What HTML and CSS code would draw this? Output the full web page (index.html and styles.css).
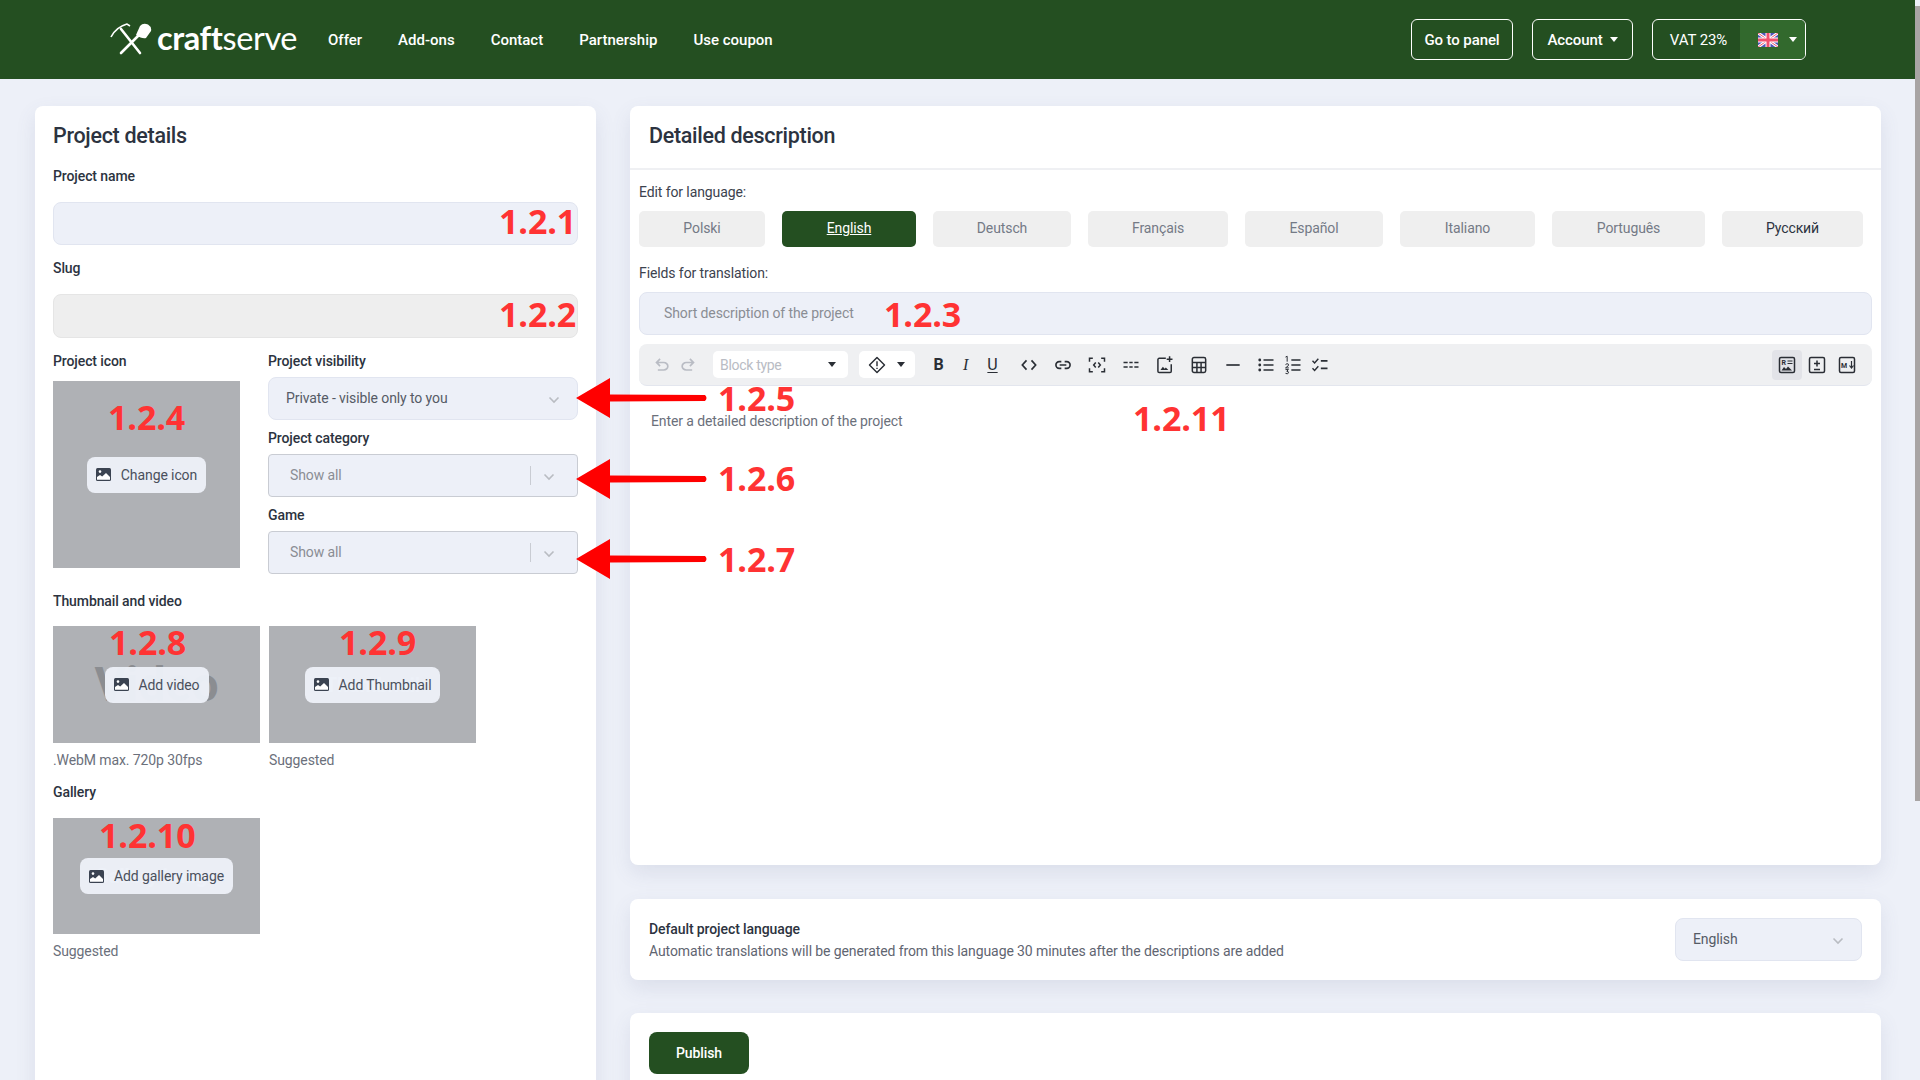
FILE: index.html
```html
<!DOCTYPE html>
<html lang="en">
<head>
<meta charset="utf-8">
<title>craftserve</title>
<link rel="stylesheet" href="styles.css">
</head>
<body>
<svg class="sprites" width="0" height="0" aria-hidden="true">
  <symbol id="pic" viewBox="0 0 15 13"><rect x="0" y="0" width="15" height="13" rx="1.5" fill="#3b4351"/><circle cx="4" cy="3.6" r="1.3" fill="#fff"/><path d="M1 11.8V9l3-2 2.2 1.6L10 5l4 4v2.8Z" fill="#fff"/></symbol>
  <symbol id="chev" viewBox="0 0 12 8"><path d="M1.5 1.5 6 6l4.5-4.5" fill="none" stroke="#b9bcc2" stroke-width="1.6"/></symbol>
</svg>
<header class="nav">
  <div class="logo">
    <svg class="logo-mark" viewBox="0 0 42 32" width="42" height="32"><path d="M1 14C4 8 10 3 17 1L20 3" fill="none" stroke="#fff" stroke-width="1.6"/><path d="M11 6 30 30" stroke="#fff" stroke-width="2.6" stroke-linecap="round"/><path d="M11 30 28 13" stroke="#fff" stroke-width="2.6" stroke-linecap="round"/><path d="M26 12 30 3Q33-.5 38 1.5 42 4 41 8L36 15Q32 16 26 12Z" fill="#fff"/></svg>
    <span class="logo-text"><b>craft</b>serve</span>
  </div>
  <nav class="menu">
    <a>Offer</a><a>Add-ons</a><a>Contact</a><a>Partnership</a><a>Use coupon</a>
  </nav>
  <div class="nav-right">
    <a class="nbtn panel">Go to panel</a>
    <a class="nbtn account">Account <i class="caret"></i></a>
    <div class="nbtn vat">
      <span class="vat-text">VAT 23%</span>
      <span class="vat-flag">
        <svg width="20" height="14" viewBox="0 0 20 14"><rect width="20" height="14" fill="#4f55b8"/><path d="M0 0 20 14M20 0 0 14" stroke="#fff" stroke-width="3"/><path d="M0 0 20 14M20 0 0 14" stroke="#f0506e" stroke-width="1"/><path d="M10 0V14M0 7H20" stroke="#fff" stroke-width="5"/><path d="M10 0V14M0 7H20" stroke="#f0506e" stroke-width="3"/></svg>
        <i class="caret"></i>
      </span>
    </div>
  </div>
</header>

<main class="page">
  <section class="card left">
    <h2 class="title">Project details</h2>
    <label class="lbl lbl-input">Project name</label>
    <div class="input"></div>
    <label class="lbl lbl-input next">Slug</label>
    <div class="input slug"></div>

    <div class="split">
      <div class="icon-col">
        <label class="lbl lbl-icon">Project icon</label>
        <div class="tile tile-icon">
          <span class="ghost ghost-icon">200 x 200</span>
          <span class="pbtn"><svg class="pic"><use href="#pic"/></svg>Change icon</span>
        </div>
      </div>
      <div class="sel-col">
        <label class="lbl lbl-sel">Project visibility</label>
        <div class="select plain"><span>Private - visible only to you</span><svg class="chev"><use href="#chev"/></svg></div>
        <label class="lbl lbl-sel next-sel">Project category</label>
        <div class="select react"><span>Show all</span><i class="sep"></i><svg class="chev"><use href="#chev"/></svg></div>
        <label class="lbl lbl-sel next-sel">Game</label>
        <div class="select react"><span>Show all</span><i class="sep"></i><svg class="chev"><use href="#chev"/></svg></div>
      </div>
    </div>

    <label class="lbl lbl-thumb">Thumbnail and video</label>
    <div class="tiles">
      <div>
        <div class="tile tile-wide">
          <span class="ghost ghost-video">Video</span>
          <span class="pbtn"><svg class="pic"><use href="#pic"/></svg>Add video</span>
        </div>
        <p class="hint">.WebM max. 720p 30fps</p>
      </div>
      <div>
        <div class="tile tile-wide">
          <span class="ghost ghost-faint">Thumbnail</span>
          <span class="pbtn"><svg class="pic"><use href="#pic"/></svg>Add Thumbnail</span>
        </div>
        <p class="hint">Suggested</p>
      </div>
    </div>
    <label class="lbl lbl-gallery">Gallery</label>
    <div class="tile tile-wide tile-gallery">
      <span class="ghost ghost-faint">Gallery image</span>
      <span class="pbtn"><svg class="pic"><use href="#pic"/></svg>Add gallery image</span>
    </div>
    <p class="hint">Suggested</p>
  </section>

  <div class="right">
    <section class="card desc">
      <h2 class="title title-desc">Detailed description</h2>
      <div class="desc-body">
        <label class="lbl-thin">Edit for language:</label>
        <div class="langs">
          <a class="lang">Polski</a><a class="lang active">English</a><a class="lang">Deutsch</a><a class="lang">Français</a><a class="lang">Español</a><a class="lang">Italiano</a><a class="lang">Português</a><a class="lang dark">Русский</a>
        </div>
        <label class="lbl-thin fields">Fields for translation:</label>
        <div class="input short">Short description of the project</div>
        <div class="toolbar">
          <span class="tool hist"><svg viewBox="0 0 24 24"><path d="M7 19v-2h7.1q1.6 0 2.7-1t1.2-2.5q0-1.500-1.200-2.500T14.100 10H7.800l2.600 2.600L9 14 4 9l5-5 1.400 1.400L7.800 8h6.300q2.400 0 4.200 1.600T20 13.500q0 2.300-1.700 3.900T14.100 19Z" fill="#b9bcc4"/></svg></span>
          <span class="tool hist"><svg class="flip" viewBox="0 0 24 24"><path d="M7 19v-2h7.1q1.6 0 2.7-1t1.2-2.5q0-1.500-1.200-2.500T14.100 10H7.800l2.600 2.600L9 14 4 9l5-5 1.400 1.400L7.800 8h6.300q2.400 0 4.200 1.600T20 13.500q0 2.300-1.700 3.900T14.100 19Z" fill="#b9bcc4"/></svg></span>
          <span class="block-type">Block type<i class="caret dark-caret"></i></span>
          <span class="admon"><svg viewBox="0 0 24 24" width="20" height="20"><path d="M12 3 21 12 12 21 3 12Z" fill="none" stroke="#2a2e35" stroke-width="1.700" stroke-linejoin="round"/><path d="M12 7.500V13.500M12 15.200V16.800" stroke="#2a2e35" stroke-width="1.700"/></svg><i class="caret dark-caret"></i></span>
          <span class="tool fmt fmt-b">B</span>
          <span class="tool fmt fmt-i">I</span>
          <span class="tool fmt fmt-u">U</span>
          <span class="tool wide first-wide"><svg viewBox="0 0 24 24"><path d="M9 6.500 4 12l5 5.500M15 6.500l5 5.500-5 5.500" fill="none" stroke="#2a2e35" stroke-width="2"/></svg></span>
          <span class="tool wide"><svg viewBox="0 0 24 24"><path d="M10 8H7.500a4 4 0 0 0 0 8H10M14 8h2.500a4 4 0 0 1 0 8H14M8 12h8" fill="none" stroke="#2a2e35" stroke-width="2"/></svg></span>
          <span class="tool wide"><svg viewBox="0 0 24 24"><path d="M3 8V4h4M17 4h4v4M21 16v4h-4M7 20H3v-4M10.500 9 8 12l2.500 3M13.500 9l2.500 3-2.500 3" fill="none" stroke="#2a2e35" stroke-width="1.800"/></svg></span>
          <span class="tool wide"><svg viewBox="0 0 24 24"><path d="M3 9h5M10 9h4M16 9h5M3 14.500h5M10 14.500h4M16 14.500h5" fill="none" stroke="#2a2e35" stroke-width="1.800"/></svg></span>
          <span class="tool wide"><svg viewBox="0 0 24 24"><path d="M13 4H5a1.500 1.500 0 0 0-1.500 1.500v14A1.500 1.500 0 0 0 5 21h13a1.500 1.500 0 0 0 1.500-1.500V11" fill="none" stroke="#2a2e35" stroke-width="1.800"/><path d="M17.500 1.500v7M14 5h7" stroke="#2a2e35" stroke-width="1.800"/><path d="M6.500 18l3-4 2 2.500 1.500-1.500 3 3Z" fill="#2a2e35"/></svg></span>
          <span class="tool wide"><svg viewBox="0 0 24 24"><rect x="4" y="3" width="16" height="18" rx="2" fill="none" stroke="#2a2e35" stroke-width="1.800"/><path d="M4 9h16M4 15h16M9.500 9v12M14.500 9v12" stroke="#2a2e35" stroke-width="1.800"/></svg></span>
          <span class="tool wide"><svg viewBox="0 0 24 24"><path d="M4 12h16" stroke="#2a2e35" stroke-width="2"/></svg></span>
          <span class="tool first-list"><svg viewBox="0 0 24 24"><path d="M9 6h12M9 12h12M9 18h12" stroke="#2a2e35" stroke-width="2"/><circle cx="4.500" cy="6" r="1.700" fill="#2a2e35"/><circle cx="4.500" cy="12" r="1.700" fill="#2a2e35"/><circle cx="4.500" cy="18" r="1.700" fill="#2a2e35"/></svg></span>
          <span class="tool"><svg viewBox="0 0 24 24"><path d="M10 6h11M10 12h11M10 18h11" stroke="#2a2e35" stroke-width="2"/><path d="M3 2.500 5 1.500V8M3 11.500Q5 9.500 6.500 11T3 15.500H7M3 17.500H6.500L4.500 19.500Q7 19.500 6.500 21.500T3 22" fill="none" stroke="#2a2e35" stroke-width="1.200"/></svg></span>
          <span class="tool"><svg viewBox="0 0 24 24"><path d="M3 7l2.500 2.500L10 4.500M3 16l2.500 2.500L10 13.500" fill="none" stroke="#2a2e35" stroke-width="1.700"/><path d="M13 7h8M13 16h8" stroke="#2a2e35" stroke-width="2"/></svg></span>
          <span class="modes">
            <span class="mode on"><svg viewBox="0 0 18 18"><rect x="1.500" y="1.500" width="15" height="15" rx="1.500" fill="none" stroke="#2a2e35" stroke-width="1.500"/><text x="3.500" y="9" class="mini">R</text><path d="M9.500 5h5M9.500 7.500h5" stroke="#2a2e35"/><path d="M3.500 14.500 6 11l2 2 2-2.500 4 4Z" fill="#2a2e35"/></svg></span>
            <span class="mode"><svg viewBox="0 0 18 18"><rect x="1.500" y="1.500" width="15" height="15" rx="1.500" fill="none" stroke="#2a2e35" stroke-width="1.500"/><path d="M9 4.500v6M6 7.500h6M6 13.500h6" stroke="#2a2e35" stroke-width="1.500"/></svg></span>
            <span class="mode"><svg viewBox="0 0 18 18"><rect x="1.500" y="1.500" width="15" height="15" rx="1.500" fill="none" stroke="#2a2e35" stroke-width="1.500"/><text x="3" y="11.500" class="mini">M</text><path d="M13.500 5v6.500M11.500 9.500l2 2.500 2-2.500" fill="none" stroke="#2a2e35" stroke-width="1.200"/></svg></span>
          </span>
        </div>
        <p class="placeholder">Enter a detailed description of the project</p>
      </div>
    </section>

    <section class="card default-lang">
      <div>
        <p class="dl-title">Default project language</p>
        <p class="dl-sub">Automatic translations will be generated from this language 30 minutes after the descriptions are added</p>
      </div>
      <div class="select plain dl-select"><span>English</span><svg class="chev"><use href="#chev"/></svg></div>
    </section>

    <section class="card publish-card">
      <a class="publish">Publish</a>
    </section>
  </div>
</main>

<div class="scrollbar"><i></i></div>

<span class="note n1">1.2.1</span>
<span class="note n2">1.2.2</span>
<span class="note n3">1.2.3</span>
<span class="note n4">1.2.4</span>
<span class="note n5">1.2.5</span>
<span class="note n6">1.2.6</span>
<span class="note n7">1.2.7</span>
<span class="note n8">1.2.8</span>
<span class="note n9">1.2.9</span>
<span class="note n10">1.2.10</span>
<span class="note n11">1.2.11</span>

<svg class="arrow a1" viewBox="0 0 132 42"><path d="M0 21 34 1V17.500L129 18Q132 21 129 24L34 24.500V41Z" fill="#ff0000"/></svg>
<svg class="arrow a2" viewBox="0 0 132 42"><path d="M0 21 34 1V17.500L129 18Q132 21 129 24L34 24.500V41Z" fill="#ff0000"/></svg>
<svg class="arrow a3" viewBox="0 0 132 42"><path d="M0 21 34 1V17.500L129 18Q132 21 129 24L34 24.500V41Z" fill="#ff0000"/></svg>
</body>
</html>
```
FILE: styles.css
```css
* { box-sizing: border-box; }
html, body { margin: 0; padding: 0; }
body {
  width: 1920px; height: 1080px; overflow: hidden; position: relative;
  background: #edf0f8; color: #2c3340;
  font-family: "Roboto", sans-serif; font-size: 14px; letter-spacing: -.1px;
}
p { margin: 0; }
.sprites { position: absolute; }

/* nav */
.nav { height: 79px; background: #244f21; display: flex; align-items: center; padding: 0 114px 0 110px; color: #fff; }
.logo { display: flex; align-items: center; gap: 5px; width: 218px; }
.logo-mark { flex: none; margin-top: -2px; }
.logo-text { font-family: "Lato", sans-serif; font-size: 32.5px; line-height: 1; letter-spacing: -.4px; color: #fff; margin-top: -3px; }
.logo-text b { font-weight: 700; }
.menu { display: flex; gap: 36px; font-size: 15px; font-weight: 500; letter-spacing: 0; }
.nav-right { margin-left: auto; display: flex; gap: 19px; }
.nbtn { height: 41px; border: 1px solid #fff; border-radius: 6px; display: flex; align-items: center; justify-content: center; font-size: 15px; font-weight: 500; color: #fff; }
.panel { width: 102px; }
.account { width: 101px; gap: 7px; }
.vat { width: 154px; overflow: hidden; justify-content: flex-start; font-weight: 400; }
.vat-text { width: 87px; text-align: center; padding-left: 4px; }
.vat-flag { flex: 1; height: 100%; background: #32692d; display: flex; align-items: center; padding-left: 18px; gap: 11px; }
.caret { width: 0; height: 0; border: 4px solid transparent; border-top: 5px solid #fff; border-bottom: 0; display: inline-block; }
.dark-caret { border-top-color: #2a2e35; }

/* page */
.page { display: grid; grid-template-columns: 561px 1251px; gap: 34px; padding: 27px 0 0 35px; }
.card { background: #fff; border-radius: 8px; box-shadow: 0 8px 20px rgba(90, 100, 140, .12); }
.left { height: 1200px; padding: 15px 18px 0; }
.title { margin: 0; font-size: 21.5px; line-height: 30px; font-weight: 500; letter-spacing: -.3px; color: #2c3340; }
.lbl { display: block; height: 20px; line-height: 20px; font-size: 14px; font-weight: 500; color: #2c3340; }
.lbl-input { margin: 15px 0 16px; }
.lbl-input.next { margin-top: 13px; }
.input { height: 43px; width: 525px; background: #edf0f8; border: 1px solid #e1e5f0; border-radius: 8px; }
.slug { height: 44px; background: #eeeeee; border-color: #e5e5e5; }

.split { display: grid; grid-template-columns: 187px 310px; gap: 28px; margin-top: 13px; }
.lbl-icon { margin-bottom: 10px; }
.lbl-sel { margin-bottom: 6px; }
.next-sel { margin-top: 8px; }
.tile { position: relative; background: #afb1b5; display: flex; align-items: center; justify-content: center; overflow: hidden; }
.tile-icon { width: 187px; height: 187px; }
.tile-wide { width: 207px; height: 117px; }
.tile-gallery { height: 116px; }
.pbtn { position: relative; height: 36px; padding: 0 9px; background: rgba(237, 240, 248, .96); border-radius: 8px; display: flex; align-items: center; gap: 10px; font-size: 14px; color: #4a505c; }
.pic { width: 15px; height: 13px; flex: none; }
.ghost { position: absolute; left: 0; right: 0; text-align: center; font-weight: 700; white-space: nowrap; }
.ghost-video { font-size: 48px; letter-spacing: 0; color: #8b8d91; }
.ghost-faint { font-size: 20px; color: #e6e9f1; }
.ghost-icon { font-size: 20px; color: #b7b9bd; }

.select { height: 43px; background: #edf0f8; border: 1px solid #e1e5f0; border-radius: 8px; display: flex; align-items: center; padding: 0 17px; font-size: 14px; color: #555b66; }
.select span { flex: 1; margin-top: -1px; }
.chev { width: 12px; height: 8px; flex: none; margin-top: 2px; }
.react { border-color: #c9ccd3; border-radius: 4px; padding: 0 22px 0 21px; color: #8a8d94; }
.sep { width: 1px; height: 19px; background: #c9ccd3; margin-right: 12px; }

.lbl-thumb { margin: 17px 0 15px; }
.tiles { display: flex; gap: 9px; }
.hint { margin-top: 7px; height: 20px; line-height: 20px; font-size: 14px; color: #6b707b; }
.lbl-gallery { margin: 12px 0 16px; }

/* right */
.right { display: flex; flex-direction: column; }
.desc { height: 759px; }
.title-desc { height: 64px; padding: 15px 19px 0; border-bottom: 2px solid #eff0f3; }
.desc-body { padding: 12px 9px 0; }
.lbl-thin { display: block; height: 20px; line-height: 20px; font-size: 14px; color: #3c424e; }
.langs { display: grid; grid-template-columns: 126px 134px 138px 140px 138px 135px 153px 141px; column-gap: 17px; margin-top: 9px; }
.lang { height: 36px; padding-bottom: 2px; border-radius: 5px; background: #efefef; display: flex; align-items: center; justify-content: center; font-size: 14px; color: #747a86; }
.lang.active { background: #244f21; color: #fff; text-decoration: underline; }
.lang.dark { color: #2c3340; }
.fields { margin-top: 16px; }
.short { width: 1233px; margin-top: 9px; display: flex; align-items: center; padding-left: 24px; padding-bottom: 2px; font-size: 14px; color: #8a8d94; }
.toolbar { width: 1233px; height: 42px; margin-top: 9px; background: #eff0f2; border-bottom: 1px solid #e3e6ee; border-radius: 8px; display: flex; align-items: center; padding-left: 10px; }
.tool { width: 27px; height: 27px; flex: none; display: flex; align-items: center; justify-content: center; }
.tool svg { width: 20px; height: 20px; }
.hist { width: 26px; }
.flip { transform: scaleX(-1); }
.block-type { width: 135px; height: 27px; margin-left: 12px; background: #fff; border-radius: 5px; display: flex; align-items: center; justify-content: space-between; padding: 0 12px 0 7px; font-size: 14px; letter-spacing: -.3px; color: #b9bcc4; }
.admon { width: 56px; height: 27px; margin-left: 11px; margin-right: 10px; background: #fff; border-radius: 5px; display: flex; align-items: center; justify-content: space-between; padding: 0 10px 0 8px; }
.fmt { font-size: 16px; color: #2a2e35; }
.fmt-b { font-weight: 700; }
.fmt-i { font-family: "Liberation Serif", serif; font-style: italic; }
.fmt-u { text-decoration: underline; text-underline-offset: 2px; }
.wide { width: 34px; }
.first-wide { margin-left: 6px; }
.first-list { margin-left: 2px; }
.modes { margin-left: auto; margin-right: 10px; display: flex; }
.mode { width: 30px; height: 30px; border-radius: 4px; display: flex; align-items: center; justify-content: center; }
.mode svg { width: 18px; height: 18px; }
.mode.on { background: #e2e3e8; }
.mini { font-size: 7px; font-weight: 700; fill: #2a2e35; }
.placeholder { margin: 25px 0 0 12px; height: 20px; line-height: 20px; font-size: 14px; color: #6b707b; }

.default-lang { height: 81px; margin-top: 34px; padding: 0 19px; display: flex; align-items: center; justify-content: space-between; }
.dl-title { font-size: 14px; line-height: 20px; font-weight: 500; color: #2c3340; }
.dl-sub { font-size: 14px; line-height: 20px; margin-top: 2px; color: #5f6571; }
.dl-select { width: 187px; }
.publish-card { height: 120px; margin-top: 33px; padding: 19px; }
.publish { width: 100px; height: 42px; background: #244f21; border-radius: 8px; display: flex; align-items: center; justify-content: center; color: #fff; font-size: 14px; font-weight: 500; }

/* overlays */
.scrollbar { position: fixed; top: 0; right: 0; width: 5px; height: 1080px; background: #edf0f8; }
.scrollbar i { display: block; margin-top: 6px; height: 795px; background: #a8a4a4; }
.note { position: absolute; font-family: "Open Sans", sans-serif; font-weight: 700; font-size: 34px; line-height: 1; color: #ff3333; white-space: nowrap; }
.n1 { left: 499px; top: 204px; }
.n2 { left: 499px; top: 297px; }
.n3 { left: 884px; top: 297px; }
.n4 { left: 108px; top: 400px; }
.n5 { left: 718px; top: 381px; }
.n6 { left: 718px; top: 461px; }
.n7 { left: 718px; top: 542px; }
.n8 { left: 109px; top: 625px; }
.n9 { left: 339px; top: 625px; }
.n10 { left: 99px; top: 818px; }
.n11 { left: 1133px; top: 401px; }
.arrow { position: absolute; left: 576px; width: 132px; height: 42px; }
.a1 { top: 377px; }
.a2 { top: 458px; }
.a3 { top: 538px; }
```
